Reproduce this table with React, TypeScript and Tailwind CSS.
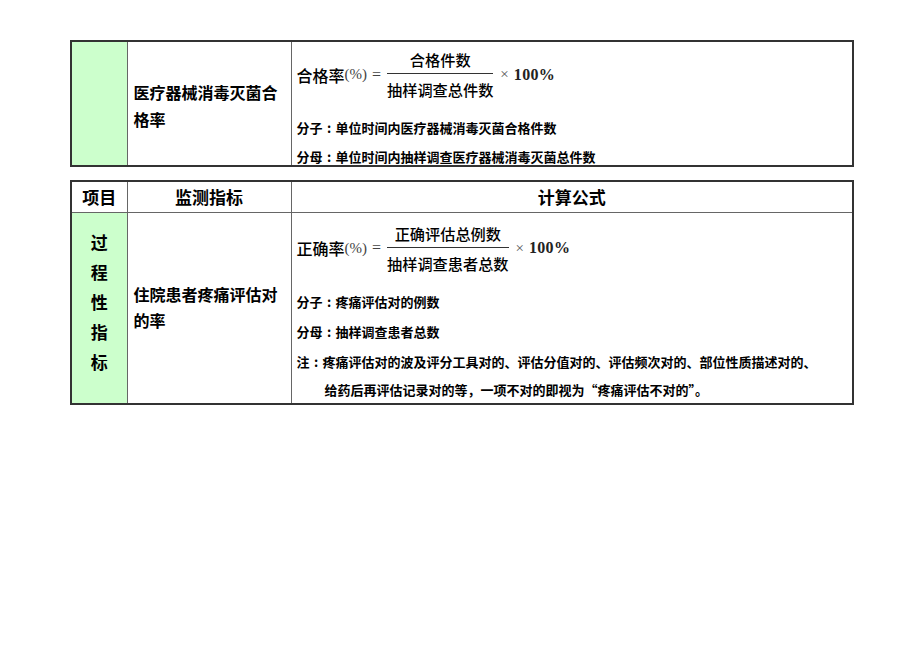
const cjk = "font-['Noto_Sans_CJK_SC','Noto_Sans',sans-serif]";
const serif = "font-['Liberation_Serif','Noto_Sans_CJK_SC',serif]";

function Fraction({ lhs, num, den }: { lhs: string; num: string; den: string }) {
  return (
    <div className="flex items-center text-black">
      <span className={`${cjk} text-[16px] font-medium`}>{lhs}</span>
      <span className={`${serif} text-[15px] text-[#444]`}>(%)</span>
      <span className={`${serif} ml-[5px] mr-[6px] text-[16px] text-[#444]`}>=</span>
      <span className="inline-flex flex-col items-center">
        <span className={`${cjk} text-[15.2px] font-medium leading-[28px]`}>{num}</span>
        <span className="h-px w-full bg-[#333]" />
        <span className={`${cjk} text-[15.2px] font-medium leading-[30px]`}>{den}</span>
      </span>
      <span className={`${serif} ml-[7px] text-[15px] text-[#555]`}>×</span>
      <span className={`${serif} ml-[5px] text-[16px] font-bold tracking-[0.3px] text-[#222]`}>100%</span>
    </div>
  );
}

function Colon() {
  return <span className="inline-block w-[13px] text-center">:</span>;
}

export default function App() {
  const cell = "border border-[#666] align-middle";
  return (
    <div className={`min-h-[651px] w-[920px] bg-white pl-[70px] pt-[40px] ${cjk} text-black`}>
      <table className="w-[784px] table-fixed border-collapse border-2 border-[#333]">
        <colgroup>
          <col className="w-[56px]" />
          <col className="w-[164px]" />
          <col />
        </colgroup>
        <tbody>
          <tr className="h-[124px]">
            <td className={`${cell} bg-[#ccffcc] p-0`} />
            <td className={`${cell} px-[6px] pt-[4px] pb-0 text-[16px] font-bold leading-[27px]`}>
              医疗器械消毒灭菌合
              <br />
              格率
            </td>
            <td className={`${cell} px-[5px] py-0 align-top`}>
              <div className="pt-[3px]">
                <Fraction lhs="合格率" num="合格件数" den="抽样调查总件数" />
              </div>
              <div className="text-[13px] font-bold">
                <div className="mt-[9px] leading-[29px]">
                  分子
                  <Colon />
                  单位时间内医疗器械消毒灭菌合格件数
                </div>
                <div className="mt-[7px] leading-[16px]">
                  分母
                  <Colon />
                  单位时间内抽样调查医疗器械消毒灭菌总件数
                </div>
              </div>
            </td>
          </tr>
        </tbody>
      </table>

      <table className="mt-[13px] w-[784px] table-fixed border-collapse border-2 border-[#333]">
        <colgroup>
          <col className="w-[56px]" />
          <col className="w-[164px]" />
          <col />
        </colgroup>
        <tbody>
          <tr className="h-[31px] text-[17px] font-bold">
            <td className={`${cell} text-center`}>项目</td>
            <td className={`${cell} text-center`}>监测指标</td>
            <td className={`${cell} text-center`}>计算公式</td>
          </tr>
          <tr className="h-[192px]">
            <td className={`${cell} bg-[#ccffcc] text-center text-[17px] font-bold leading-[30px]`}>
              <div className="flex flex-col items-center pb-[12px]">
                <span>过</span>
                <span>程</span>
                <span>性</span>
                <span>指</span>
                <span>标</span>
              </div>
            </td>
            <td className={`${cell} px-[6px] text-[16px] font-bold leading-[26px]`}>
              <div className="pb-[2px]">
                住院患者疼痛评估对
                <br />
                的率
              </div>
            </td>
            <td className={`${cell} px-[5px] align-top`}>
              <div className="pt-[6px]">
                <Fraction lhs="正确率" num="正确评估总例数" den="抽样调查患者总数" />
              </div>
              <div className="mt-[9px] text-[13px] font-bold leading-[30px]">
                <div>
                  分子
                  <Colon />
                  疼痛评估对的例数
                </div>
                <div>
                  分母
                  <Colon />
                  抽样调查患者总数
                </div>
                <div>
                  注<Colon />
                  疼痛评估对的波及评分工具对的、评估分值对的、评估频次对的、部位性质描述对的、
                </div>
                <div className="pl-[28px] leading-[26px]">
                  给药后再评估记录对的等，一项不对的即视为“疼痛评估不对的”。
                </div>
              </div>
            </td>
          </tr>
        </tbody>
      </table>
    </div>
  );
}
